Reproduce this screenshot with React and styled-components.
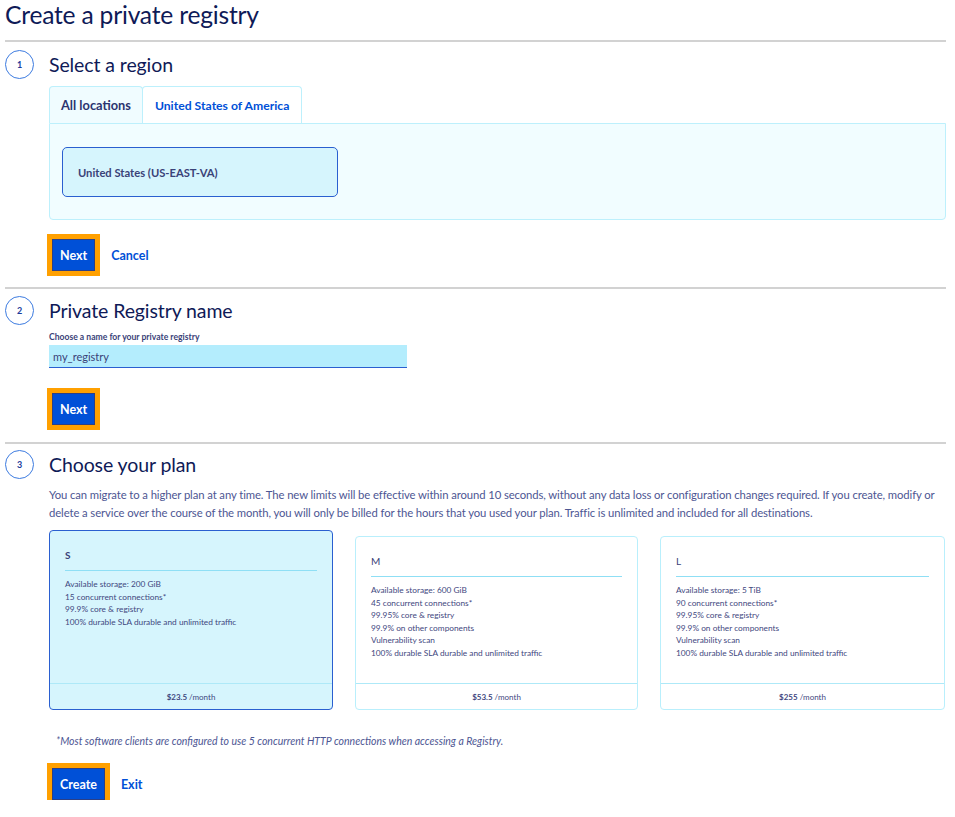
import React from "react";
import styled, { createGlobalStyle } from "styled-components";

const GlobalStyle = createGlobalStyle`
  body {
    margin: 0;
    background: #fff;
    font-family: "Source Sans Pro", Lato, "Liberation Sans", sans-serif;
    color: #4d5693;
  }
`;

const Page = styled.div`
  padding: 0 9px 0 5px;
  width: 941px;
`;

const Title = styled.h1`
  margin: 0;
  height: 31px;
  font-size: 24.6px;
  font-weight: 400;
  line-height: 30px;
  color: #0f1a57;
  letter-spacing: -0.2px;
`;

const Rule = styled.hr`
  margin: ${(p) => p.$top || 9}px 0 0;
  border: 0;
  border-top: 2px solid #d2d2d2;
`;

const Step = styled.section`
  padding-top: ${(p) => p.$top || 7}px;
`;

const StepHead = styled.div`
  display: flex;
  align-items: center;
  gap: 14px;
  height: 30px;
`;

const Circle = styled.div`
  width: 27px;
  height: 27px;
  border: 1.5px solid #3c7be0;
  border-radius: 50%;
  display: flex;
  align-items: center;
  justify-content: center;
  font-size: 9px;
  font-weight: 700;
  color: #1b3c9c;
`;

const StepTitle = styled.h2`
  margin: 0 0 0 1px;
  font-size: 19.5px;
  font-weight: 400;
  color: #0f1a57;
  letter-spacing: -0.1px;
`;

const StepBody = styled.div`
  padding-left: 44px;
`;

const Tabs = styled.div`
  display: flex;
  margin-top: 7px;
`;

const Tab = styled.div`
  height: 36px;
  padding: 0 ${(p) => (p.$active ? 11 : 12)}px;
  display: flex;
  align-items: center;
  font-size: ${(p) => (p.$active ? 12.8 : 12.2)}px;
  font-weight: 700;
  border: 1px solid #bdf0fc;
  border-bottom: 0;
  border-radius: 4px 4px 0 0;
  background: ${(p) => (p.$active ? "#f0fcff" : "#fff")};
  color: ${(p) => (p.$active ? "#2b3470" : "#0050d7")};
  margin-left: ${(p) => (p.$active ? 0 : -1)}px;
`;

const Panel = styled.div`
  height: 97px;
  box-sizing: border-box;
  background: #f1fdff;
  border: 1px solid #bdf0fc;
  border-radius: 0 0 4px 4px;
  padding: 23px 12px;
`;

const RegionCard = styled.div`
  width: 276px;
  height: 50px;
  box-sizing: border-box;
  background: #d6f5fd;
  border: 1px solid #2a5fd0;
  border-radius: 5px;
  display: flex;
  align-items: center;
  padding-left: 15px;
  font-size: 11.2px;
  font-weight: 700;
  color: #3a4278;
`;

const Actions = styled.div`
  display: flex;
  align-items: center;
  gap: 16px;
  padding: ${(p) => p.$top}px 0 0 3px;
`;

const Button = styled.button`
  height: 32px;
  padding: 0 7px;
  border: 1px solid #2c3f86;
  background: #0050d7;
  color: #fff;
  font-family: inherit;
  font-size: 12.5px;
  font-weight: 700;
  box-shadow: 0 0 0 5px #ffa000;
`;

const LinkButton = styled.span`
  font-size: 12.5px;
  font-weight: 700;
  color: #0050d7;
`;

const Label = styled.div`
  margin-top: 7px;
  font-size: 8.6px;
  font-weight: 700;
  color: #3a4278;
`;

const Input = styled.div`
  margin-top: 3px;
  width: 358px;
  height: 23px;
  box-sizing: border-box;
  background: #b4edfd;
  border-bottom: 1px solid #2a5fd0;
  padding-left: 4px;
  display: flex;
  align-items: center;
  font-size: 11px;
  color: #3a4278;
`;

const Intro = styled.p`
  margin: 7px 0 0;
  font-size: 11.3px;
  letter-spacing: -0.1px;
  line-height: 18px;
  color: #4d5693;
`;

const Plans = styled.div`
  display: grid;
  grid-template-columns: 284px 283px 285px;
  column-gap: 22px;
  margin-top: 8px;
  height: 180px;
`;

const Plan = styled.div`
  display: flex;
  flex-direction: column;
  margin-top: ${(p) => (p.$selected ? 0 : 6)}px;
  border: 1px solid ${(p) => (p.$selected ? "#2a5fd0" : "#b9effc")};
  border-radius: 4px;
  background: ${(p) => (p.$selected ? "#d6f5fd" : "#fff")};
`;

const PlanHead = styled.div`
  margin: 0 15px;
  height: 40px;
  box-sizing: border-box;
  padding-top: 18px;
  font-size: 10px;
  font-weight: ${(p) => (p.$selected ? 700 : 400)};
  color: #3a4278;
  border-bottom: 1px solid #8fdff5;
`;

const Features = styled.ul`
  flex: 1;
  list-style: none;
  margin: 0;
  padding: 7px 15px 0;
`;

const Feature = styled.li`
  font-size: 8.3px;
  line-height: 12.6px;
  color: #3f4880;
`;

const PlanFoot = styled.div`
  height: 25px;
  border-top: 1.5px solid #aee9f8;
  display: flex;
  align-items: center;
  justify-content: center;
  font-size: 8px;
  color: #3f4880;

  b {
    font-weight: 700;
    margin-right: 2px;
  }
`;

const Footnote = styled.p`
  margin: 25px 0 0 7px;
  font-size: 10.5px;
  font-style: italic;
  color: #4d5693;
`;

const plans = [
  {
    name: "S",
    price: "$23.5",
    selected: true,
    features: [
      "Available storage: 200 GiB",
      "15 concurrent connections*",
      "99.9% core & registry",
      "100% durable SLA durable and unlimited traffic",
    ],
  },
  {
    name: "M",
    price: "$53.5",
    features: [
      "Available storage: 600 GiB",
      "45 concurrent connections*",
      "99.95% core & registry",
      "99.9% on other components",
      "Vulnerability scan",
      "100% durable SLA durable and unlimited traffic",
    ],
  },
  {
    name: "L",
    price: "$255",
    features: [
      "Available storage: 5 TiB",
      "90 concurrent connections*",
      "99.95% core & registry",
      "99.9% on other components",
      "Vulnerability scan",
      "100% durable SLA durable and unlimited traffic",
    ],
  },
];

export default function App() {
  return (
    <Page>
      <GlobalStyle />
      <Title>Create a private registry</Title>
      <Rule />

      <Step>
        <StepHead>
          <Circle>1</Circle>
          <StepTitle>Select a region</StepTitle>
        </StepHead>
        <StepBody>
          <Tabs>
            <Tab $active>All locations</Tab>
            <Tab>United States of America</Tab>
          </Tabs>
          <Panel>
            <RegionCard>United States (US-EAST-VA)</RegionCard>
          </Panel>
          <Actions $top={19}>
            <Button>Next</Button>
            <LinkButton>Cancel</LinkButton>
          </Actions>
        </StepBody>
      </Step>
      <Rule $top={16} />

      <Step $top={6}>
        <StepHead>
          <Circle>2</Circle>
          <StepTitle>Private Registry name</StepTitle>
        </StepHead>
        <StepBody>
          <Label>Choose a name for your private registry</Label>
          <Input>my_registry</Input>
          <Actions $top={25}>
            <Button>Next</Button>
          </Actions>
        </StepBody>
      </Step>
      <Rule $top={17} />

      <Step $top={5}>
        <StepHead>
          <Circle>3</Circle>
          <StepTitle>Choose your plan</StepTitle>
        </StepHead>
        <StepBody>
          <Intro>
            You can migrate to a higher plan at any time. The new limits will be effective within around 10 seconds,
            without any data loss or configuration changes required. If you create, modify or delete a service over
            the course of the month, you will only be billed for the hours that you used your plan. Traffic is
            unlimited and included for all destinations.
          </Intro>
          <Plans>
            {plans.map((plan) => (
              <Plan key={plan.name} $selected={plan.selected}>
                <PlanHead $selected={plan.selected}>{plan.name}</PlanHead>
                <Features>
                  {plan.features.map((f) => (
                    <Feature key={f}>{f}</Feature>
                  ))}
                </Features>
                <PlanFoot>
                  <b>{plan.price}</b> /month
                </PlanFoot>
              </Plan>
            ))}
          </Plans>
          <Footnote>
            *Most software clients are configured to use 5 concurrent HTTP connections when accessing a Registry.
          </Footnote>
          <Actions $top={21}>
            <Button>Create</Button>
            <LinkButton>Exit</LinkButton>
          </Actions>
        </StepBody>
      </Step>
    </Page>
  );
}
